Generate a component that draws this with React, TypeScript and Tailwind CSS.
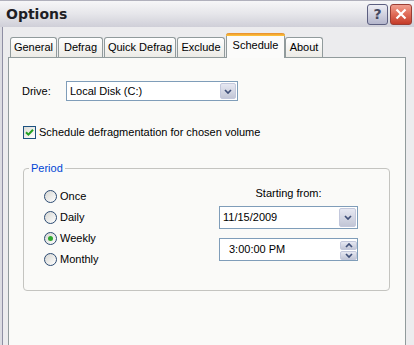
import React from "react";

function Chevron({ up = false }: { up?: boolean }) {
  return (
    <svg width="8" height="5" viewBox="0 0 8 5" className="block">
      <path
        d={up ? "M1 4 L4 1 L7 4" : "M1 1 L4 4 L7 1"}
        stroke="#3f4f78"
        strokeWidth="1.7"
        fill="none"
      />
    </svg>
  );
}

function DropButton({ w = 16 }: { w?: number }) {
  return (
    <div
      className={`${w === 16 ? "w-[16px]" : "w-[17px]"} self-stretch my-[1px] mr-[1px] rounded-[2px] border border-[#c3c8dc] bg-linear-to-b from-[#e6e8f2] to-[#c2c6d6] flex items-center justify-center`}
    >
      <Chevron />
    </div>
  );
}

function Radio({ label, checked = false }: { label: string; checked?: boolean }) {
  return (
    <div className="h-[21px] flex items-center">
      <div className="w-[13px] h-[13px] rounded-full border border-[#2b4a72] bg-linear-to-br from-[#d6d6d2] to-[#ffffff] flex items-center justify-center">
        {checked && <div className="w-[5px] h-[5px] rounded-full bg-[#2fa82f]" />}
      </div>
      <span className="ml-[3px] leading-[13px]">{label}</span>
    </div>
  );
}

function Tab({ label, w, selected = false }: { label: string; w: string; selected?: boolean }) {
  if (selected) {
    return (
      <div
        className={`${w} h-[25px] -mb-[1px] relative z-10 rounded-t-[3px] border-x border-[#919b9c] bg-[#fbfbfa] flex flex-col`}
      >
        <div className="h-[3px] -mx-[1px] rounded-t-[3px] bg-linear-to-b from-[#e68b2c] to-[#ffc73c]" />
        <div className="flex-1 flex justify-center pt-[3px] leading-[13px]">{label}</div>
      </div>
    );
  }
  return (
    <div
      className={`${w} h-[20px] mr-[1px] rounded-t-[3px] border-t border-x border-[#919b9c] bg-linear-to-b from-[#ffffff] to-[#ecebe6] flex items-center justify-center leading-[13px]`}
    >
      {label}
    </div>
  );
}

export default function App() {
  return (
    <div className="w-[414px] h-[345px] overflow-hidden bg-[#ececee] flex flex-col text-[11px] text-black font-['Liberation_Sans',Arial,sans-serif]">
      {/* Title bar */}
      <div className="h-[27px] shrink-0 flex items-center pl-[6px] pr-[2px] border-t border-[#b0b0bc] bg-linear-to-b from-[#f6f6f8] via-[#e6e6ea] to-[#cfcfd8]">
        <span className="font-['DejaVu_Sans',sans-serif] font-bold text-[14px] text-[#1e1e24] leading-none">
          Options
        </span>
        <div className="ml-auto flex items-center gap-[2px]">
          <div className="w-[21px] h-[21px] rounded-[3px] border border-[#5c5f80] bg-linear-to-b from-[#eeeef4] to-[#b4b6cc] flex items-center justify-center">
            <span className="font-['DejaVu_Sans',sans-serif] font-bold text-[14px] leading-none text-[#454860]">?</span>
          </div>
          <div className="w-[22px] h-[21px] rounded-[3px] border border-[#9a3e34] bg-linear-to-b from-[#f0a090] via-[#df6a56] to-[#c43a28] flex items-center justify-center">
            <svg width="12" height="12" viewBox="0 0 12 12">
              <path d="M1.5 1.5 L10.5 10.5 M10.5 1.5 L1.5 10.5" stroke="#ffffff" strokeWidth="2.2" />
            </svg>
          </div>
        </div>
      </div>

      {/* Body */}
      <div className="flex-1 flex border-l-[2px] border-[#dcdce2]">
        <div className="flex-1 flex border-l border-[#8f8fa4] pl-[5px]">
          <div className="w-[398px] flex flex-col">
            {/* Tabs */}
            <div className="h-[24px] mt-[6px] flex items-end pl-[2px]">
              <Tab label="General" w="w-[47px]" />
              <Tab label="Defrag" w="w-[45px]" />
              <Tab label="Quick Defrag" w="w-[72px]" />
              <Tab label="Exclude" w="w-[48px]" />
              <Tab label="Schedule" w="w-[59px]" selected />
              <Tab label="About" w="w-[38px]" />
            </div>

            {/* Panel */}
            <div className="flex-1 border border-b-0 border-[#919b9c] bg-[#fafaf8] flex flex-col">
              <div className="pt-[23px] pl-[13px] flex items-center">
                <span className="w-[44px] leading-[13px]">Drive:</span>
                <div className="w-[172px] h-[20px] border border-[#7f9db9] bg-white flex items-center">
                  <span className="flex-1 pl-[3px] leading-[13px]">Local Disk (C:)</span>
                  <DropButton />
                </div>
              </div>

              <div className="mt-[25px] pl-[14px] h-[13px] flex items-center">
                <div className="w-[13px] h-[13px] border border-[#1c5180] bg-linear-to-br from-[#dcdcd7] to-[#ffffff] flex items-center justify-center">
                  <svg width="9" height="9" viewBox="0 0 9 9">
                    <path d="M1 4.2 L3.4 6.6 L8 1.8" stroke="#21a121" strokeWidth="2" fill="none" />
                  </svg>
                </div>
                <span className="ml-[3px] leading-[13px]">Schedule defragmentation for chosen volume</span>
              </div>

              <fieldset className="mt-[23px] ml-[14px] w-[367px] rounded-[4px] border border-[#c4c4c0]">
                <legend className="ml-[5px] px-[2px] leading-[13px] text-[#0046d5]">Period</legend>
                <div className="flex">
                  <div className="w-[195px] pl-[20px] pt-[11px] pb-[20px] flex flex-col">
                    <Radio label="Once" />
                    <Radio label="Daily" />
                    <Radio label="Weekly" checked />
                    <Radio label="Monthly" />
                  </div>
                  <div className="w-[139px] pt-[11px] flex flex-col">
                    <div className="h-[14px] leading-[14px] text-center">Starting from:</div>
                    <div className="mt-[6px] h-[23px] border border-[#7f9db9] bg-white flex items-center">
                      <span className="flex-1 pl-[3px] leading-[13px]">11/15/2009</span>
                      <DropButton w={17} />
                    </div>
                    <div className="mt-[9px] h-[23px] border border-[#7f9db9] bg-white flex items-center">
                      <span className="flex-1 pl-[9px] leading-[13px]">3:00:00 PM</span>
                      <div className="w-[17px] self-stretch pt-[1px] pb-[0px] mr-[0px] flex flex-col gap-[1px] justify-center">
                        <div className="h-[9px] rounded-[2px] border border-[#c3c8dc] bg-linear-to-b from-[#e6e8f2] to-[#c2c6d6] flex items-center justify-center">
                          <Chevron up />
                        </div>
                        <div className="h-[9px] rounded-[2px] border border-[#c3c8dc] bg-linear-to-b from-[#e6e8f2] to-[#c2c6d6] flex items-center justify-center">
                          <Chevron />
                        </div>
                      </div>
                    </div>
                  </div>
                </div>
              </fieldset>
            </div>
          </div>
        </div>
      </div>
    </div>
  );
}
